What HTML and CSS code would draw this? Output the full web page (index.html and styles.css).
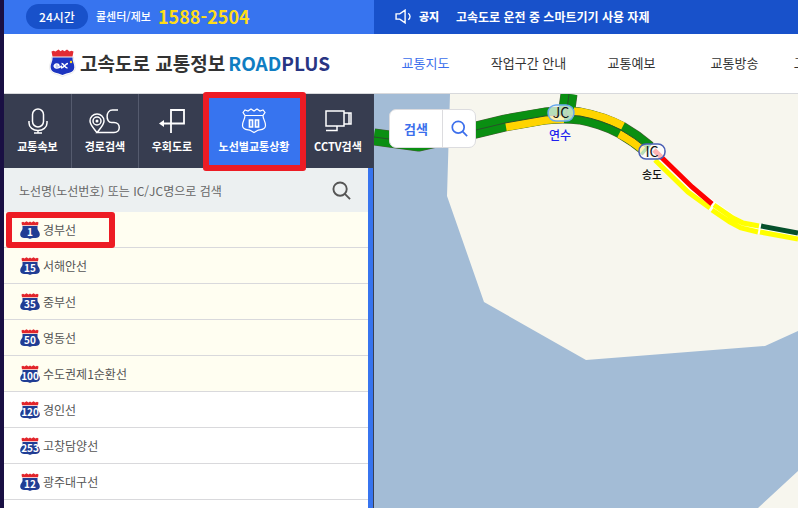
FILE: index.html
```html
<!DOCTYPE html>
<html lang="ko">
<head>
    <meta charset="UTF-8">
    <title>고속도로 교통정보 ROADPLUS</title>
    <link rel="stylesheet" href="styles.css">
</head>

<body>
    <!-- shared icons -->
    <svg class="defs" aria-hidden="true">
        <symbol id="shield" viewBox="0 0 20 18">
            <path fill="#203d94" d="M2.500 5h15v3c.5 2 2.300 3 2.300 5.500 0 3-3 3.500-6 3.500-1.500 0-2.500.4-3.800 1-1.300-.6-2.300-1-3.800-1-3 0-6-.5-6-3.500C.2 11 2 10 2.500 8z"/>
            <path fill="#e2252b" d="M1.500 1.500L3 .8l1.500.7 2-1.300 2 1.300L10 .4l1.500 1.100 2-1.300 2 1.300L17 .8l1.500.7L18 4.300H2z"/>
        </symbol>
        <symbol id="search" viewBox="0 0 20 20">
            <g fill="none" stroke="currentColor" stroke-width="2">
                <circle cx="8.500" cy="8.500" r="7"/>
                <path d="M13.500 13.500l5.500 5.500"/>
            </g>
        </symbol>
    </svg>

    <div class="topbar">
        <div class="callcenter">
            <span class="badge">24시간</span>
            <span class="call-label">콜센터/제보</span>
            <strong class="tel">1588-2504</strong>
        </div>
        <div class="notice">
            <svg class="speaker" viewBox="0 0 16 14">
                <path fill="none" stroke="#fff" stroke-width="1.300" d="M1 4.500h3.500L9.500 1v12l-5-3.500H1zM12.500 4c2.200 1.600 2.200 4.400 0 6"/>
            </svg>
            <strong class="notice-title">공지</strong>
            <a href="#">고속도로 운전 중 스마트기기 사용 자제</a>
        </div>
    </div>

    <header class="header">
        <h1 class="logo">
            <svg class="logo-mark" viewBox="0 0 26 28">
                <path fill="#fff" stroke="#ddd" stroke-width=".6" d="M2 8h22c-.5 4 2 6 1.800 11-.3 6-6.300 5.500-12.800 8.500C6.500 24.500.500 25 .2 19 0 14 2.500 12 2 8z"/>
                <path fill="#1d35c0" d="M3 8.500h20c-.3 4 2 6 1.800 10-.3 5.500-6.800 5-11.800 7.500-5-2.500-11.500-2-11.800-7.500C1 14.500 3.300 12.500 3 8.500z"/>
                <path fill="#e32b33" d="M2 2.500l2-.8 2 .8L9 .5l2 1.800L13 1l2 1.300L17.500.5l2.500 2 2-.8 2 .8L23 7.500H3z"/>
                <path fill="none" stroke="#fff" stroke-width="1.500" d="M4 17h5.500c0-3-4.500-2.500-4.500 0s3.500 2.800 6.500.500l1-.5M12 14.500c2.500 0 3 4.500 6 4.500M18.500 14.500c-3 0-3.500 4.500-7 4.500"/>
                <circle cx="21.500" cy="13" r="1.200" fill="#ffd91e"/>
            </svg>
            <span class="logo-ko">고속도로 교통정보</span>
            <span class="logo-en">ROAD<em>PLUS</em></span>
        </h1>
        <nav class="gnb">
            <ul>
                <li><a class="on" href="#">교통지도</a></li>
                <li><a href="#">작업구간 안내</a></li>
                <li><a href="#">교통예보</a></li>
                <li><a href="#">교통방송</a></li>
                <li><a href="#">고속도로 도움말</a></li>
            </ul>
        </nav>
    </header>

    <main class="content">
        <aside class="side">
            <ul class="tabs">
                <li>
                    <button type="button">
                        <svg viewBox="0 0 28 26">
                            <g fill="none" stroke="#fff" stroke-width="1.500">
                                <rect x="8.500" y="1" width="11" height="18" rx="5.500"/>
                                <path d="M5 13v2c0 4.500 4 7.500 9 7.500s9-3 9-7.500v-2M14 22.500V25M10 25h8"/>
                            </g>
                        </svg>
                        <span>교통속보</span>
                    </button>
                </li>
                <li>
                    <button type="button">
                        <svg class="wide" viewBox="0 0 34 26">
                            <g fill="none" stroke="#fff" stroke-width="1.500">
                                <path d="M9 24.500C6 20.500 2 17 2 13a7 7 0 0 1 14 0c0 4-4 7.500-7 11.500h17c7 0 7-10 0-10h-2.500c-6 0-6-12.500 1-12.500H30"/>
                                <circle cx="9" cy="13" r="4"/>
                            </g>
                            <circle cx="9" cy="13" r="1.500" fill="#fff"/>
                        </svg>
                        <span>경로검색</span>
                    </button>
                </li>
                <li>
                    <button type="button">
                        <svg viewBox="0 0 28 26">
                            <path fill="none" stroke="#fff" stroke-width="1.800" d="M3 15.500h23V2H13v23"/>
                            <path fill="#fff" d="M1 15.500l5-3.500v7z"/>
                        </svg>
                        <span>우회도로</span>
                    </button>
                </li>
                <li class="on">
                    <button type="button">
                        <svg viewBox="0 0 28 26">
                            <path fill="none" stroke="#fff" stroke-width="1.200" d="M3 4.500L5 2l3 1 3-2 3 2 3-2 3 2 3-1 2 2.500-2 3c0 4 2.500 5 2.500 10 0 5-6 4-8 5l-3.500 2-3.500-2c-2-1-8 0-8-5 0-5 2.500-6 2.500-10zM5 7.500h18"/>
                            <path fill="none" stroke="#fff" stroke-width="1.700" d="M9.500 12h3v7h-3zM15.500 12h3v7h-3z"/>
                        </svg>
                        <span>노선별교통상황</span>
                    </button>
                    <i class="mark"></i>
                </li>
                <li>
                    <button type="button">
                        <svg viewBox="0 0 28 26">
                            <path fill="none" stroke="#fff" stroke-width="1.500" d="M2 3h18v15H2zM20 5h5v11h-5M24 5h3v11h-3M13 18v4.500H2"/>
                        </svg>
                        <span>CCTV검색</span>
                    </button>
                </li>
            </ul>

            <div class="panel">
                <form class="finder">
                    <input type="text" placeholder="노선명(노선번호) 또는 IC/JC명으로 검색" aria-label="노선 검색">
                    <button type="button" aria-label="검색"><svg><use href="#search"/></svg></button>
                </form>
                <ul class="routes">
                    <li class="main-route"><a href="#"><span class="no"><svg><use href="#shield"/></svg><b>1</b></span>경부선</a><i class="mark"></i></li>
                    <li class="main-route"><a href="#"><span class="no"><svg><use href="#shield"/></svg><b>15</b></span>서해안선</a></li>
                    <li class="main-route"><a href="#"><span class="no"><svg><use href="#shield"/></svg><b>35</b></span>중부선</a></li>
                    <li class="main-route"><a href="#"><span class="no"><svg><use href="#shield"/></svg><b>50</b></span>영동선</a></li>
                    <li class="main-route"><a href="#"><span class="no"><svg><use href="#shield"/></svg><b>100</b></span>수도권제1순환선</a></li>
                    <li><a href="#"><span class="no"><svg><use href="#shield"/></svg><b>120</b></span>경인선</a></li>
                    <li><a href="#"><span class="no"><svg><use href="#shield"/></svg><b>253</b></span>고창담양선</a></li>
                    <li><a href="#"><span class="no"><svg><use href="#shield"/></svg><b>12</b></span>광주대구선</a></li>
                    <li><a href="#"><span class="no"><svg><use href="#shield"/></svg></span></a></li>
                </ul>
            </div>
        </aside>

        <section class="map">
            <svg class="map-canvas" viewBox="0 0 424 414" preserveAspectRatio="xMinYMin slice">
                <!-- land -->
                <path fill="#f7f6ee" d="M76 0L73 102l37 106 102 58 179-14 33-15V0zM424 377l-40 37h40z"/>

                <!-- expressway, two lanes -->
                <g fill="none" stroke-linejoin="round">
                    <path stroke="#4b5b38" stroke-width="17" d="M195 0l-3 22M0 43l45 6 57-13 29-7 40-7q18-2 35 0 22 4 41 14 14 8 27 19"/>
                    <path stroke="#0a8f12" stroke-width="16" d="M195 0l-3 22M0 43l45 6 57-13 29-7 40-7q18-2 35 0 22 4 41 14 14 8 27 19"/>
                    <path stroke="#ffd400" stroke-width="8" d="M132 33l40-7q9-1 18-1M200 17.500q3 0 7 .500 22 4 42 14M245 40q12 6 24 16"/>
                    <path stroke="#28512a" stroke-width="1" d="M195 0l-3 22M0 43l45 6 57-13 29-7 40-7q18-2 35 0 22 4 41 14 14 8 27 19"/>
                </g>

                <!-- city road -->
                <g fill="none" stroke="#ff0" stroke-width="5">
                    <path stroke="#fff" stroke-width="10" d="M284 64l32 32 44 31 9 5 17 3 38 7"/>
                    <path d="M281 66l33 32 22 16M338 116l18 12 11 6 17 4M386 138l38 7M340 111l19 13 10 5 16 3"/>
                    <path stroke="red" d="M280 56l38 37 20 17"/>
                    <path stroke="#05502b" d="M387 132l37 7"/>
                </g>

                <rect class="jc" x="174" y="11" width="26" height="16" rx="8"/>
                <text class="node" x="187" y="24">JC</text>
                <text class="jc-name" x="186" y="46">연수</text>
                <rect class="ic" x="265" y="50" width="26" height="15" rx="7"/>
                <text class="node" x="278" y="63">IC</text>
                <text class="ic-name" x="278" y="85">송도</text>
            </svg>
            <div class="map-search">
                <button type="button">검색</button>
                <button type="button" aria-label="지도 검색"><svg><use href="#search"/></svg></button>
            </div>
        </section>
    </main>
</body>

</html>
```

FILE: styles.css
```css
* {
    box-sizing: border-box;
}

html,
body {
    height: 100%;
}

body {
    display: flex;
    flex-direction: column;
    margin: 0;
    border-left: 4px solid #190f43;
    overflow: hidden;
    font-family: "Noto Sans CJK KR", "Noto Sans", sans-serif;
    font-size: 12px;
    color: #333;
    background: #fff;
}

ul,
h1 {
    margin: 0;
    padding: 0;
}

ul {
    list-style: none;
}

a {
    color: inherit;
    text-decoration: none;
}

button {
    padding: 0;
    border: 0;
    background: none;
    font-family: inherit;
    color: inherit;
    cursor: pointer;
}

.defs {
    position: absolute;
    width: 0;
    height: 0;
}

/* top bar */
.topbar {
    display: flex;
    flex: none;
    height: 34px;
    padding-bottom: 2px;
    color: #fff;
    background: linear-gradient(to right, #3774ef 370px, #1851ca 370px);
}

.callcenter {
    display: flex;
    align-items: center;
    width: 370px;
    padding-left: 22px;
}

.badge {
    width: 62px;
    margin-right: 8px;
    border-radius: 13px;
    line-height: 25px;
    text-align: center;
    font-weight: 500;
    background: #1851ca;
}

.call-label {
    width: 62px;
    font-size: 11px;
    font-weight: 500;
    white-space: nowrap;
}

.tel {
    font-size: 18px;
    line-height: 24px;
    color: #ffdc19;
}

.notice {
    display: flex;
    align-items: center;
    padding-left: 21px;
    font-weight: bold;
}

.speaker {
    width: 17px;
    height: 15px;
    margin-right: 7px;
}

.notice-title {
    width: 37px;
    font-size: 11px;
}

/* header */
.header {
    display: flex;
    flex: none;
    align-items: center;
    height: 60px;
    padding-bottom: 2px;
    border-bottom: 1px solid #d8d9dc;
}

.logo {
    display: flex;
    flex: none;
    align-items: center;
    width: 370px;
    padding-left: 45px;
    font-size: 19px;
    line-height: 28px;
}

.logo-mark {
    width: 27px;
    height: 28px;
    margin-right: 4px;
}

.logo-en {
    margin-left: 3px;
    color: #107dc2;
}

.logo-en em {
    font-style: normal;
    color: #283583;
}

.gnb {
    flex: 1;
    min-width: 0;
    overflow: hidden;
}

.gnb ul {
    display: flex;
}

.gnb li {
    flex: 0 0 103px;
    text-align: center;
    font-size: 13px;
    white-space: nowrap;
}

.gnb .on {
    color: #3c6fec;
}

.content {
    display: flex;
    flex: 1;
    min-height: 0;
}

/* side panel */
.side {
    display: flex;
    flex-direction: column;
    flex: none;
    width: 370px;
    border-right: 1px solid #3a4052;
}

.tabs {
    display: grid;
    grid-template-columns: 68px 67px 66px 1fr 70px;
    flex: none;
    height: 74px;
    color: #fff;
    background: #373d50;
}

.tabs li {
    position: relative;
    border-right: 1px solid #555b6e;
}

.tabs li:nth-child(n+3) {
    border-right: 0;
}

.tabs .on {
    background: #3774ef;
}

.tabs button {
    display: flex;
    flex-direction: column;
    align-items: center;
    gap: 4px;
    width: 100%;
    height: 100%;
    padding-bottom: 14px;
    justify-content: flex-end;
    font-size: 11px;
    font-weight: bold;
    line-height: 16px;
    white-space: nowrap;
}

.tabs svg {
    width: 28px;
    height: 26px;
}

.tabs .wide {
    width: 34px;
}

/* red highlight frame */
.mark {
    position: absolute;
    border: 6px solid #ed1c24;
    border-radius: 3px;
    pointer-events: none;
}

.tabs .mark {
    z-index: 1;
    inset: -2px -3px -3px -2px;
}

.panel {
    flex: 1;
    min-height: 0;
    overflow: hidden;
    border-right: 5px solid #3774ef;
}

.finder {
    display: flex;
    align-items: center;
    height: 44px;
    padding: 0 17px 0 15px;
    background: #ecf0f1;
}

.finder input {
    flex: 1;
    min-width: 0;
    padding: 0;
    border: 0;
    background: none;
    font-family: inherit;
    font-size: 12px;
}

.finder input::placeholder {
    color: #666;
}

.finder button {
    color: #555;
}

.finder svg,
.map-search svg {
    display: block;
    width: 19px;
    height: 19px;
}

.routes li {
    position: relative;
    height: 36px;
    border-bottom: 1px solid #d9d9dc;
}

.routes .main-route {
    background: #fffef1;
}

.routes a {
    display: flex;
    align-items: center;
    gap: 3px;
    height: 100%;
    padding-left: 16px;
    color: #555;
}

.routes .mark {
    top: 0;
    left: 2px;
    width: 109px;
    height: 36px;
}

.no {
    display: grid;
    width: 20px;
    height: 18px;
}

.no svg,
.no b {
    grid-area: 1 / 1;
    width: 20px;
    height: 18px;
}

.no b {
    padding-top: 3px;
    font-size: 10px;
    line-height: 15px;
    text-align: center;
    color: #fff;
}

/* map */
.map {
    position: relative;
    flex: 1;
    min-width: 0;
    background: #a3bcd6;
}

.map-canvas {
    display: block;
    width: 100%;
    height: 100%;
}

.map-canvas text {
    text-anchor: middle;
}

.map-canvas rect {
    fill: rgba(255, 255, 255, .7);
    stroke-width: 1.5px;
}

.jc {
    stroke: #68a9ec;
}

.ic {
    stroke: #4a5fb5;
}

.node {
    font-size: 14px;
    fill: #111;
}

.jc-name {
    font-size: 12px;
    font-weight: 500;
    fill: #2020ee;
}

.ic-name {
    font-size: 11px;
    font-weight: 500;
    fill: #111;
}

.map-search {
    position: absolute;
    top: 15px;
    left: 15px;
    display: grid;
    grid-template-columns: 52px 33px;
    height: 39px;
    border: 1px solid #dcdcdf;
    border-radius: 7px;
    color: #3c6fec;
    background: #fff;
}

.map-search button {
    display: grid;
    place-items: center;
    font-size: 13px;
    font-weight: bold;
}

.map-search button + button {
    border-left: 1px solid #dcdcdf;
}

.map-search svg {
    width: 17px;
    height: 17px;
}
```
